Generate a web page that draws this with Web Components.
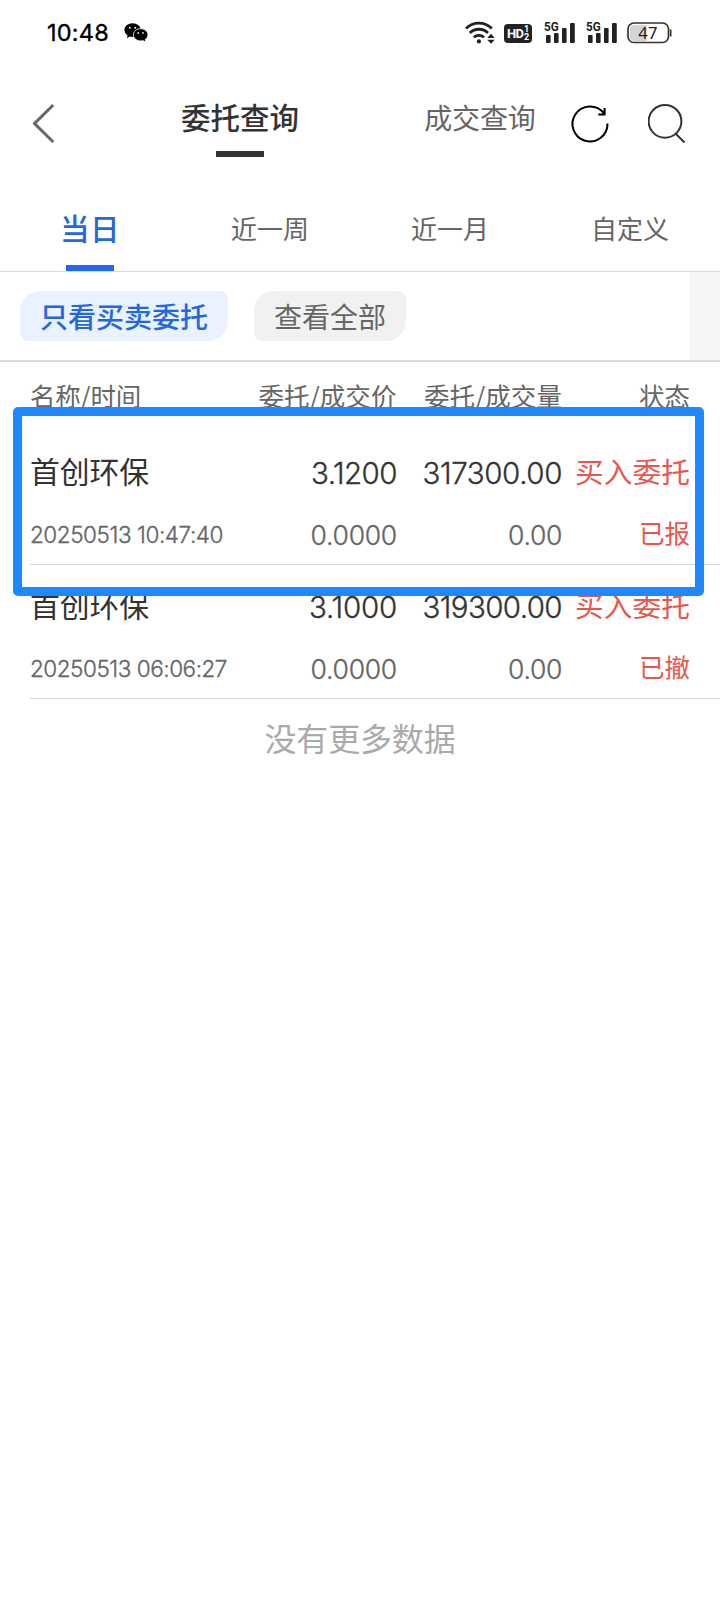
<!DOCTYPE html>
<html lang="zh-CN">
<head>
<meta charset="utf-8">
<title>委托查询</title>
<style>
html,body{margin:0;background:#fff}
body{width:720px;height:1612px;overflow:hidden;font-family:"Noto Sans CJK SC",sans-serif}
</style>
</head>
<body>
<order-page></order-page>
<script>
const define=(name,html,setup)=>{
  const t=document.createElement('template');
  t.innerHTML=html;
  customElements.define(name,class extends HTMLElement{
    constructor(){super();this.attachShadow({mode:'open'}).append(t.content.cloneNode(true));}
    connectedCallback(){setup&&setup(this,this.shadowRoot);}
  });
};

/* One line of text, tracked so that it takes exactly `w` pixels */
define('fit-text',`<style>
:host{display:block;white-space:pre;line-height:1;flex:none}
:host([num]){font-family:Inter,"Noto Sans CJK SC",sans-serif;font-weight:300;-webkit-text-stroke:.35px currentColor}
span{display:inline-block;position:relative}
</style><span><slot></slot></span>`,(el,root)=>{
  const s=root.querySelector('span'),w=+el.getAttribute('w'),n=el.textContent.length;
  el.style.fontSize=el.getAttribute('size')+'px';
  if(el.hasAttribute('dy'))s.style.top=el.getAttribute('dy')+'px';
  if(w){s.style.letterSpacing=((w-s.getBoundingClientRect().width)/n)+'px';}
});

define('signal-bars',`<style>
:host{display:block;width:32px;height:24px;position:relative}
svg{display:block}
b{position:absolute;left:0;top:0;font:700 13px/12px Roboto,sans-serif;color:#222;transform:scaleX(.9);transform-origin:0 0}
</style><svg width="32" height="24" fill="#222"><rect x="2" y="14" width="4.600" height="8" rx="1"/><rect x="10" y="12" width="4.600" height="10" rx="1"/><rect x="18" y="7" width="4.600" height="15" rx="1"/><rect x="26" y="2" width="4.800" height="20" rx="1"/></svg><b>5G</b>`);

define('status-bar',`<style>
:host{display:flex;height:65px;align-items:center;box-sizing:border-box;padding:0 48px 0 47px;color:#000}
.wx{margin-left:15px}
.r{margin-left:auto;display:flex;align-items:center}
.hd{width:28px;height:19px;border-radius:4px;background:#222;color:#fff;display:flex;align-items:center;margin:1px 12px 0 9px;box-sizing:border-box;padding-left:3px;font:700 13px/19px Roboto,sans-serif;letter-spacing:-.6px}
.hd i{font:700 9px/8px Roboto,sans-serif;display:grid;margin-left:.5px}
signal-bars+signal-bars{margin:0 9px 0 10px}
.bat{position:relative;width:45px;height:22px}
.bat svg{display:block}
.bat span{position:absolute;left:1px;top:0;width:40px;text-align:center;font:400 16.5px/22px "Noto Sans",sans-serif;color:#222;letter-spacing:.3px}
</style>
<fit-text num size="23.500" w="62" style="font-weight:400">10:48</fit-text>
<svg class="wx" width="25" height="21" viewBox="0 0 24 20"><path d="M8.200 1C3.800 1 .4 4 .4 7.700c0 2.100 1.200 4 3 5.200l-.5 2.500 2.700-1.500c.8.2 1.700.4 2.600.4 4.400 0 8-3 8-6.600S12.600 1 8.200 1z" fill="#000"/><path d="M16 6.300c3.900 0 7 2.600 7 5.900 0 1.900-1 3.500-2.600 4.600l.5 2.400-2.600-1.400c-.7.2-1.500.3-2.300.3-3.900 0-7-2.600-7-5.900s3.100-5.900 7-5.900z" fill="#000" stroke="#fff" stroke-width=".8"/><g fill="#fff"><circle cx="5.600" cy="5.400" r=".9"/><circle cx="10.800" cy="5.400" r=".9"/><circle cx="13.700" cy="10.400" r=".8"/><circle cx="18.200" cy="10.400" r=".8"/></g></svg>
<div class="r">
<svg width="30" height="24" viewBox="0 0 30 24" fill="none" stroke="#222" stroke-width="2.800"><path d="M1 7.400a18.500 18.500 0 0 1 25.800 0M4.800 11.900a13.200 13.200 0 0 1 18.200 0M8.800 16.300a7.700 7.700 0 0 1 10.200 0"/><circle cx="13.900" cy="20.400" r="2.100" fill="#222" stroke="none"/><path d="M26 12.800l3.700 4.200h-7.400zM26 22.800l3.700-4h-7.400z" fill="#222" stroke="none"/></svg>
<div class="hd">HD<i><span>1</span><span>2</span></i></div>
<signal-bars></signal-bars><signal-bars></signal-bars>
<div class="bat"><svg width="45" height="22"><path d="M7 3h13v16H7a4 4 0 0 1-4-4V7a4 4 0 0 1 4-4z" fill="#d4d4d4"/><rect x="1" y="1" width="40.500" height="19.500" rx="6" fill="none" stroke="#333" stroke-width="1.700"/><path d="M43.700 7.500v7" stroke="#333" stroke-width="1.600"/></svg><span>47</span></div>
</div>`);

define('nav-bar',`<style>
:host{display:grid;grid-template-columns:180px 120px 124px 112px 1fr;height:125px}
.back{padding:36px 0 0 30px}
.t{display:flex;flex-direction:column;align-items:center;padding-top:37px}
.on{color:#333;font-weight:500}.off{color:#666}
.t u{width:48px;height:6px;background:#333;margin-top:19.500px}
.ic{display:flex;padding:36px 0 0 32px;gap:36px}
svg{display:block}
</style>
<div class="back"><svg width="30" height="46" fill="none" stroke="#666" stroke-width="3"><path d="M23.200 4L4.500 22.500 23.200 41"/></svg></div>
<div class="t on"><fit-text size="29.500" w="118">委托查询</fit-text><u></u></div><div></div>
<div class="t off"><fit-text size="28" w="111.500" dy="1">成交查询</fit-text></div>
<div class="ic"><svg width="44" height="46" fill="none" stroke="#000" stroke-width="2"><path d="M39.500 22.500A17.500 17.500 0 1 1 35.800 12.200M36.600 7v6.500H30.300"/></svg>
<svg width="44" height="46" fill="none" stroke="#333" stroke-width="2"><circle cx="17" cy="20.300" r="16.400"/><path d="M27.500 32.500l9 9"/></svg></div>`);

define('range-tab',`<style>
:host{display:flex;flex-direction:column;align-items:center;justify-content:space-between;height:81px;color:#666;padding-top:24px;box-sizing:border-box}
:host([active]){color:#2468e0}
u{width:48px;height:6px}
:host([active]) u{background:#2069f0}
</style><slot></slot><u></u>`);

define('filter-chip',`<style>
:host{display:flex;align-items:center;height:50px;padding:0 20px;border-radius:20px 8px 20px 8px;background:#f1f1f1;color:#666}
:host([active]){background:#ebf2ff;color:#2468e0;font-weight:500}
</style><slot></slot>`);

define('order-row',`<style>
:host{display:grid;grid-template-columns:180px 187px 165px 128px;grid-template-rows:83px 42px;margin-left:30px;height:134px;box-sizing:border-box;border-bottom:1px solid #d9d9d9;align-items:center;justify-items:end;color:#333}
.l{justify-self:start}.g{color:#666}.r{color:#e8564e}
</style>
<fit-text class="l" size="29.800" w="119" dy="-2"></fit-text>
<fit-text num size="29.500" dy="1"></fit-text><fit-text num size="29.500" w="139.500" dy="1"></fit-text>
<fit-text class="r" size="28.700" w="115" dy="-1"></fit-text>
<fit-text num class="g l" size="22.500"></fit-text>
<fit-text num class="g" size="26.500" w="86.500"></fit-text><fit-text num class="g" size="26.500" w="54"></fit-text>
<fit-text class="g r" size="25.500" w="51" dy="-3" style="color:#e8564e"></fit-text>`);
/* Cells are filled before the row is connected, so every fit-text measures its own value */
const OrderRow=customElements.get('order-row');
const makeRow=(cells,widths)=>{
  const r=new OrderRow();
  r.shadowRoot.querySelectorAll('fit-text').forEach((c,i)=>{c.textContent=cells[i];if(widths[i])c.setAttribute('w',widths[i]);});
  return r;
};

define('order-page',`<style>
:host{display:block;position:relative;width:720px;height:1612px;background:#fff}
.tabs{display:grid;grid-template-columns:repeat(4,180px);border-bottom:1px solid #d8d9db}
.chips{display:flex;align-items:center;gap:26px;height:88px;padding-left:20px;border-bottom:2px solid #d9d9d9}
.chips i{margin-left:auto;width:30px;height:88px;background:#f5f6f8}
.head{display:grid;grid-template-columns:180px 186.500px 165.500px 128px;justify-items:end;margin-left:30px;height:69px;padding-top:20px;box-sizing:border-box;color:#666}
.head>:first-child{justify-self:start}
.end{display:flex;justify-content:center;color:#aaa;padding-top:22px}
.mark{position:absolute;left:13px;top:407px;width:691px;height:189px;box-sizing:border-box;border:9px solid #1f88fc;border-radius:5px}
</style>
<status-bar></status-bar><nav-bar></nav-bar>
<div class="tabs">
<range-tab active><fit-text size="29.500" w="60" dy="-1" style="font-weight:500">当日</fit-text></range-tab>
<range-tab><fit-text size="26" w="78" dy="1">近一周</fit-text></range-tab>
<range-tab><fit-text size="26" w="78" dy="1">近一月</fit-text></range-tab>
<range-tab><fit-text size="26" w="78" dy="1">自定义</fit-text></range-tab></div>
<div class="chips"><filter-chip active><fit-text size="28" w="168">只看买卖委托</fit-text></filter-chip><filter-chip><fit-text size="28" w="112">查看全部</fit-text></filter-chip><i></i></div>
<div class="head"><fit-text size="25.500" w="111">名称/时间</fit-text><fit-text size="25.500" w="138">委托/成交价</fit-text><fit-text size="25.500" w="138">委托/成交量</fit-text><fit-text size="25.500" w="51">状态</fit-text></div>
<div class="rows"></div>
<div class="end"><fit-text size="32" w="191">没有更多数据</fit-text></div>
<div class="mark"></div>`,(el,root)=>{
  root.querySelector('.rows').append(
    makeRow(['首创环保','3.1200','317300.00','买入委托','20250513 10:47:40','0.0000','0.00','已报'],{1:86,4:193}),
    makeRow(['首创环保','3.1000','319300.00','买入委托','20250513 06:06:27','0.0000','0.00','已撤'],{1:88,4:197}));
});
</script>
</body>
</html>
